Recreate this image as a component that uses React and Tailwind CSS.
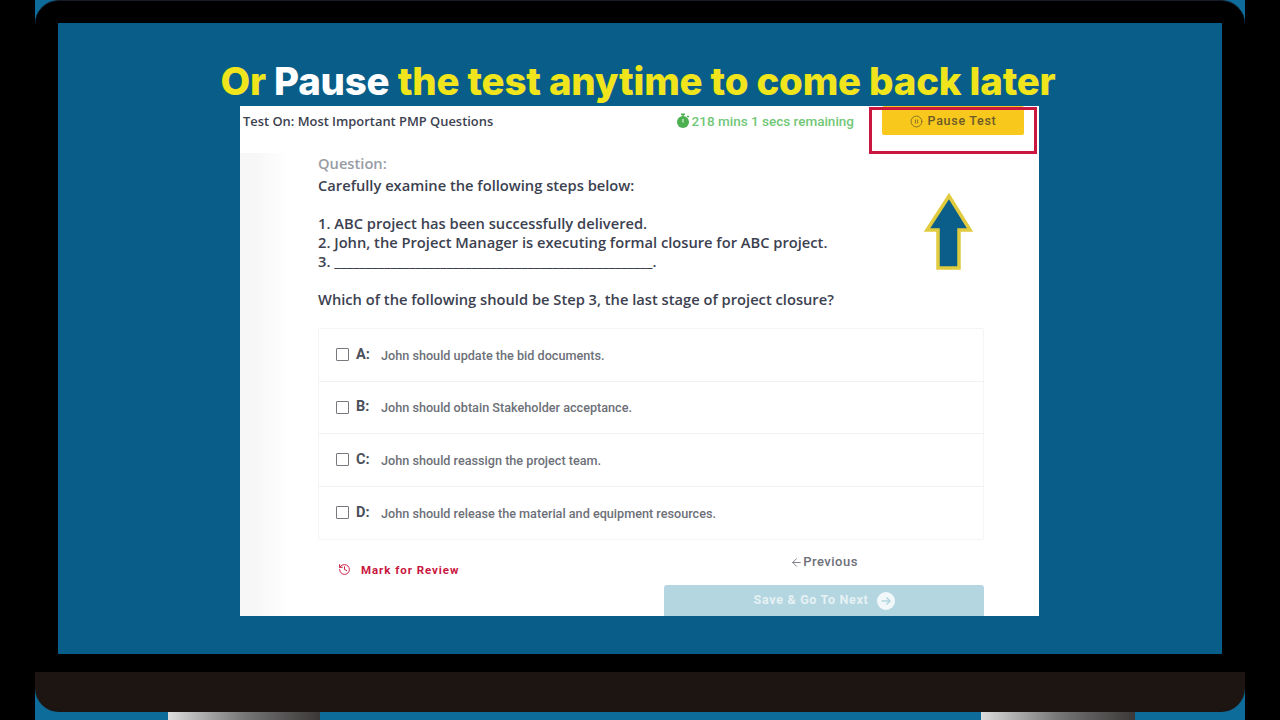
import React from "react";
import { ArrowLeft, CirclePause, History } from "lucide-react";

const options = [
  { letter: "A:", text: "John should update the bid documents." },
  { letter: "B:", text: "John should obtain Stakeholder acceptance." },
  { letter: "C:", text: "John should reassign the project team." },
  { letter: "D:", text: "John should release the material and equipment resources." },
];

function Stopwatch() {
  return (
    <svg width="14" height="16" viewBox="0 0 14 16" className="shrink-0">
      <rect x="5" y="0.5" width="4" height="1.6" fill="#4caf50" />
      <rect x="6.2" y="1.5" width="1.6" height="2" fill="#4caf50" />
      <circle cx="7" cy="9" r="6" fill="#4caf50" />
      <rect x="11" y="2.8" width="2" height="1.6" transform="rotate(45 12 3.6)" fill="#4caf50" />
      <rect x="6.4" y="6" width="1.2" height="3.6" fill="#d6f0d6" />
    </svg>
  );
}

function UpArrow() {
  return (
    <svg width="52" height="82" viewBox="0 0 52 82">
      <polygon
        points="26,5 47,39 36,39 36,77 15,77 15,39 4,39"
        fill="#0b5e89"
        stroke="#e0ca3e"
        strokeWidth="3.5"
      />
    </svg>
  );
}

function NextIcon() {
  return (
    <svg width="18" height="18" viewBox="0 0 18 18" className="shrink-0">
      <circle cx="9" cy="9" r="9" fill="#f2f8fa" />
      <path d="M4.5 9h8M9.5 5.5 13 9l-3.5 3.5" fill="none" stroke="#b4d6e0" strokeWidth="1.6" />
    </svg>
  );
}

export default function App() {
  return (
    <div className="w-[1280px] h-[720px] bg-black flex justify-center overflow-hidden">
      <div className="w-[1210px] h-[720px] bg-[#0d6c99] flex flex-col">
        {/* Laptop lid */}
        <div className="h-[672px] bg-black rounded-t-[24px] border-t border-[#161b26] pt-[22px] px-[23px]">
          <div className="w-[1164px] h-[631px] bg-[#085e89] flex flex-col">
            <h1 className="h-[83px] pt-[36px] pr-[4px] text-center text-[38.4px] leading-[44px] font-extrabold tracking-[-0.2px] text-[#f0e51c] whitespace-nowrap font-['Inter',sans-serif]">
              Or <span className="text-white">Pause</span> the test anytime to come back later
            </h1>

            {/* Test card */}
            <div className="relative ml-[182px] w-[799px] h-[510px] bg-white overflow-hidden font-['Roboto',sans-serif]">
              <div className="h-[47px] flex items-start justify-between pl-[3px] pr-[15px] shadow-[0_1px_3px_rgba(0,0,0,0.08)]">
                <span className="mt-[6px] text-[12.9px] leading-[18px] font-semibold text-[#3c4150] font-['Open_Sans',sans-serif]">
                  Test On: Most Important PMP Questions
                </span>
                <div className="flex items-start">
                  <span className="mt-[6px] flex items-center gap-[2px] text-[13.5px] leading-[18px] font-medium text-[#71c777]">
                    <Stopwatch />
                    218 mins 1 secs remaining
                  </span>
                  <button className="ml-[28px] w-[142px] h-[29px] pt-[1px] rounded-[2px] bg-[#f8c81c] flex items-center justify-center gap-[5px] text-[12.5px] font-medium tracking-[0.7px] text-[#6b5a2a]">
                    <CirclePause size={13} strokeWidth={1.4} />
                    Pause Test
                  </button>
                </div>
              </div>

              <div className="bg-gradient-to-r from-[#f7f7f8] from-[2%] to-white to-[6%] h-[463px] pl-[78px] pr-[55px]">
                <div className="font-['Open_Sans',sans-serif] text-[#3c4150] font-semibold text-[14.7px]">
                  <p className="pt-[1px] leading-[19px] text-[#999ca5]">Question:</p>
                  <p className="mt-[3px] leading-[19px]">Carefully examine the following steps below:</p>
                  <div className="mt-[19px] leading-[19px]">
                    <p>1. ABC project has been successfully delivered.</p>
                    <p>2. John, the Project Manager is executing formal closure for ABC project.</p>
                    <p>3. ___________________________________________________.</p>
                  </div>
                  <p className="mt-[19px] leading-[19px]">
                    Which of the following should be Step 3, the last stage of project closure?
                  </p>
                </div>

                <div className="mt-[19px] border border-[#f5f5f6] rounded-[2px] divide-y divide-[#f1f1f2]">
                  {options.map((o) => (
                    <div key={o.letter} className="h-[52.5px] flex items-center pl-[17px]">
                      <span className="w-[13px] h-[13px] border border-[#77797f] rounded-[1px] bg-white" />
                      <span className="ml-[7px] w-[25px] text-[14.5px] font-bold text-[#4a4e5a]">{o.letter}</span>
                      <span className="pt-[3px] text-[12.65px] font-medium text-[#6d7078]">{o.text}</span>
                    </div>
                  ))}
                </div>

                {/* Footer actions */}
                <div className="flex justify-between">
                  <div className="pl-[20px] pt-[22px] flex items-start gap-[10px] text-[11.5px] leading-[16px] font-bold tracking-[0.95px] text-[#c9173f]">
                    <History size={13} strokeWidth={1.8} className="mt-[1px]" />
                    Mark for Review
                  </div>
                  <div className="w-[320px]">
                    <div className="h-[45px] pt-[13px] flex justify-center items-start text-[13px] leading-[18px] font-medium tracking-[0.5px] text-[#6d7078]">
                      <ArrowLeft size={13} strokeWidth={1.6} className="mt-[3px]" />
                      Previous
                    </div>
                    <button className="w-[320px] h-[40px] pb-[9px] rounded-t-[3px] bg-[#b4d6e0] flex items-center justify-center gap-[8px] text-[12.5px] font-bold tracking-[0.7px] text-[#e6f1f4]">
                      Save &amp; Go To Next
                      <NextIcon />
                    </button>
                  </div>
                </div>
              </div>

              {/* Annotation over the card */}
              <div className="absolute left-[629px] top-[1px] w-[168px] h-[47px] border-[3px] border-[#c9173f]" />
              <div className="absolute left-[683px] top-[85px]">
                <UpArrow />
              </div>
            </div>
          </div>
        </div>

        {/* Laptop base */}
        <div className="h-[40px] bg-[#1d1512] rounded-b-[24px]" />
        <div className="h-[8px] flex justify-between pl-[133px] pr-[110px]">
          <div className="w-[152px] bg-gradient-to-r from-[#dddddd] via-[#777777] to-[#3c3838]" />
          <div className="w-[154px] bg-gradient-to-r from-[#dddddd] via-[#777777] to-[#3c3838]" />
        </div>
      </div>
    </div>
  );
}
